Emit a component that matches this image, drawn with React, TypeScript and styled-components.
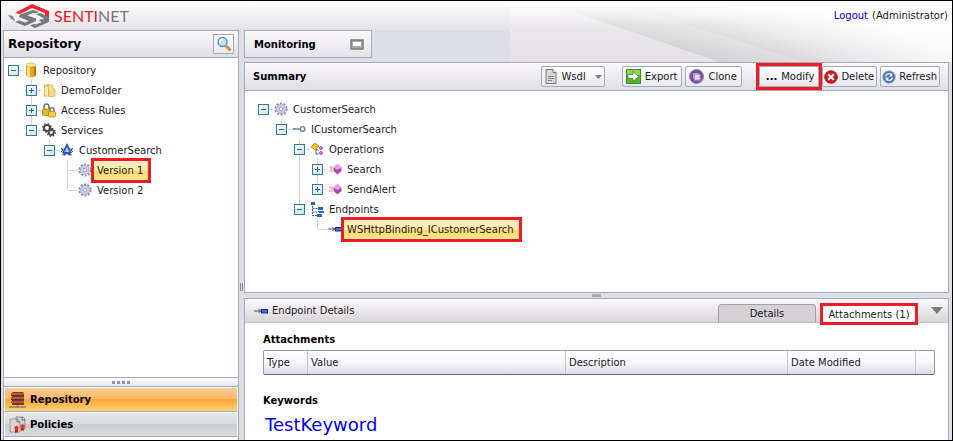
import React from "react";
import styled, { createGlobalStyle, css } from "styled-components";

const line = "#a3abb8";
const softLine = "#d4d5da";
const alert = "#ee1c24";

const highlight = css`
  outline: 3px solid ${alert};
  position: relative;
  z-index: 1;
`;

const GlobalStyle = createGlobalStyle`
  * { box-sizing: border-box; }
  body { margin: 0; }
  body, button, table { font-family: "DejaVu Sans", Verdana, sans-serif; font-size: 10px; color: #1c1c1c; }
  h1, h2, h3, ul, p { margin: 0; padding: 0; }
  ul { list-style: none; }
  button { margin: 0; cursor: pointer; }
  svg { display: block; flex: none; }
`;

const Page = styled.div`
  position: relative;
  display: flex;
  flex-direction: column;
  min-height: 100vh;
  border: 1px solid #000;
  background: #dedee8;
`;

const Backdrop = styled.svg`
  position: absolute;
  top: 0;
  right: 0;
  width: 442px;
  height: 61px;
`;

const Header = styled.header`
  display: flex;
  align-items: center;
  justify-content: space-between;
  height: 29px;
  padding: 0 4px 0 7px;
  background: linear-gradient(#fff, #e4e3eb);
`;

const Brand = styled.div`
  display: flex;
  align-items: center;
  gap: 4px;
  font: 16px/20px Lato, sans-serif;
  color: #77787b;
  b { font-weight: 400; color: #f5161c; }
`;

const Account = styled.div`
  position: relative;
  line-height: 14px;
  a { color: #0000f0; text-decoration: none; margin-right: 4px; }
`;

const Body = styled.div`
  position: relative;
  flex: 1;
  display: grid;
  grid-template-columns: 236px 5px minmax(0, 1fr);
  padding: 0 3px 0 2px;
`;

const Sidebar = styled.aside`
  display: flex;
  flex-direction: column;
  padding-bottom: 3px;
  border: 1px solid ${line};
  border-bottom: 0;
  background: #fff;
`;

const SidebarHead = styled.div`
  display: flex;
  align-items: center;
  justify-content: space-between;
  height: 27px;
  padding: 0 4px;
  border-bottom: 1px solid ${line};
  background: linear-gradient(#fdf9fb, #dedee6);
  h1 { font-size: 12px; color: #000; }
`;

const SearchButton = styled.button`
  display: grid;
  place-items: center;
  width: 21px;
  height: 20px;
  padding: 0;
  border: 1px solid ${line};
  background: linear-gradient(#fff, #e9e9f0);
`;

const Tree = styled.ul`
  flex: 1;
  padding: 2px 4px;
`;

const Branch = styled.ul`
  padding-left: 18px;
`;

const Node = styled.li`
  background: linear-gradient(${softLine}, ${softLine}) 5px 0 / 1px 100% no-repeat;
  &:last-child { background-size: 1px 10px; }
  ${Tree} > & { background: none; }
`;

const NodeRow = styled.div`
  display: flex;
  align-items: center;
  height: 20px;
  white-space: nowrap;
`;

const Expander = styled.button`
  display: grid;
  place-items: center;
  width: 11px;
  height: 11px;
  padding: 0;
  border: 1px solid #2f8096;
  background: linear-gradient(135deg, #fff, #cfe3ea);
`;

const Stub = styled.span<{ $leaf?: boolean }>`
  width: ${p => (p.$leaf ? 9 : 3)}px;
  height: 1px;
  margin: ${p => (p.$leaf ? "0 1px 0 6px" : "0 1px")};
  background: ${softLine};
`;

const Label = styled.span<{ $selected?: boolean }>`
  margin-left: 2px;
  padding: 0 5px 0 3px;
  line-height: 19px;
  ${p => p.$selected && css`
    background: linear-gradient(#fdf0c4, #fce9a9 50%, #fbd75f 51%, #fde79b);
    ${highlight}
  `}
`;

const Grip = styled.div`
  display: flex;
  align-items: center;
  justify-content: center;
  gap: 2px;
  height: 10px;
  border: solid ${line};
  border-width: 1px 0;
  background: linear-gradient(#fff, #e6e6ed);
  i { width: 3px; height: 3px; background: #8f98a6; }
`;

const NavButton = styled.button<{ $active?: boolean }>`
  display: flex;
  align-items: center;
  gap: 4px;
  height: 25px;
  padding: 0 4px;
  border: 1px solid #fff;
  border-bottom: 1px solid ${line};
  font-weight: 700;
  color: #000;
  background: ${p => p.$active
    ? "linear-gradient(#fccb96, #fdb765 48%, #fda637 50%, #fed277)"
    : "linear-gradient(#e6e7ea, #d9dade 48%, #cbccd1 50%, #dcdde1)"};
`;

const ColumnSplitter = styled.div`
  display: flex;
  align-items: center;
  justify-content: center;
  gap: 1px;
  padding-top: 104px;
  i { width: 1px; height: 8px; background: #888; }
`;

const Main = styled.main`
  display: flex;
  flex-direction: column;
  min-width: 0;
`;

const MonitoringBox = styled.section`
  display: flex;
  align-items: center;
  justify-content: space-between;
  width: 128px;
  height: 28px;
  margin-bottom: 4px;
  padding: 0 7px 0 9px;
  border: 1px solid ${line};
  background: linear-gradient(#fbf8fa, #e4e3ea);
  h2 { font-size: 10px; color: #000; }
`;

const MinimizeButton = styled.button`
  padding: 0;
  border: 0;
  background: none;
`;

const Panel = styled.section<{ $grow?: boolean }>`
  display: flex;
  flex-direction: column;
  flex: ${p => (p.$grow ? "1" : "none")};
  border: 1px solid ${line};
  border-bottom-width: ${p => (p.$grow ? 1 : 0)}px;
  background: #fff;
`;

const SummaryHead = styled.div`
  display: flex;
  align-items: center;
  justify-content: space-between;
  height: 28px;
  padding: 0 8px;
  border-bottom: 1px solid ${line};
  background: linear-gradient(#fbf7fa, #dfdfe7);
  h2 { font-size: 10px; color: #000; }
`;

const Toolbar = styled.div`
  display: flex;
  gap: 17px;
`;

const ButtonGroup = styled.div`
  display: flex;
  gap: 3px;
`;

const ToolButton = styled.button<{ $marked?: boolean; $tight?: boolean }>`
  display: flex;
  align-items: center;
  gap: ${p => (p.$tight ? 3 : 4)}px;
  height: 21px;
  padding: ${p => (p.$tight ? "0 2px 0 1px" : "0 4px 0 3px")};
  border: 1px solid ${line};
  border-radius: 2px;
  background: linear-gradient(#fff, #e8e7ee);
  white-space: nowrap;
  ${p => p.$marked && css`padding: 0 4px 0 6px; border-radius: 0; ${highlight}`}
  strong { color: #000; }
`;

const MenuArrow = styled.span`
  margin: 0 -2px 0 5px;
`;

const RowSplitter = styled.div`
  display: grid;
  place-items: center;
  height: 5px;
  i { width: 9px; height: 3px; background: #a7a9af; }
`;

const DetailsHead = styled.div`
  display: flex;
  align-items: center;
  gap: 4px;
  height: 24px;
  padding: 0 5px 0 9px;
  border-bottom: 1px solid #bfc5cf;
  background: linear-gradient(#fdfafd, #d8d5d8);
  h2 { flex: 1; font-size: 10px; font-weight: 400; }
`;

const Tabs = styled.div`
  display: flex;
  align-items: flex-end;
  align-self: stretch;
  gap: 7px;
  margin-right: 12px;
`;

const Tab = styled.button<{ $active?: boolean }>`
  height: 18px;
  padding: 0;
  border: 1px solid #a09fa4;
  border-bottom: 0;
  border-radius: 4px 4px 0 0;
  background: #d5d2d6;
  width: 98px;
  ${p => p.$active && css`
    width: 92px;
    height: 16px;
    border: 0;
    border-radius: 0;
    background: #fff;
    ${highlight}
  `}
`;

const Collapse = styled.button`
  padding: 0;
  border: 0;
  background: none;
`;

const DetailsBody = styled.div`
  padding: 10px 13px 2px 18px;
  h3 { font-size: 10px; line-height: 14px; color: #000; }
`;

const Grid = styled.table`
  width: 100%;
  margin: 3px 0 19px;
  table-layout: fixed;
  border: 1px solid #8f9cab;
  border-bottom-color: #5f6b7c;
  border-radius: 2px;
  border-spacing: 0;
  background: linear-gradient(#fff, #f7f6fc 50%, #dcdce4);
  th {
    height: 23px;
    padding: 0 3px;
    text-align: left;
    font-weight: 400;
    border-left: 1px solid #c3c4cb;
  }
  th:first-child { border-left: 0; }
`;

const Col = styled.col<{ $w?: number }>`
  width: ${p => (p.$w ? `${p.$w}px` : "auto")};
`;

const Keyword = styled.p`
  padding: 3px 0 0 2px;
  font-size: 18px;
  line-height: 27px;
  color: #0000f5;
`;

const Logo = () => (
  <svg width="42" height="24" viewBox="0 0 42 24">
    <path d="M7 9 24 0 41 7v7l-4-2V9L24 4 12 10z" fill="#f5232a" />
    <path d="M0 11l5 1 2 5-4-2z" fill="#8a8b8e" />
    <path d="M12 10.500 25 6l6 2-4 1.500-2-.5-6 2.500 9 3v2.500L17 22 7 18l4-1.500 6 2 4-1.500-10-4z" fill="#77787b" />
    <path d="M28 10l4-1 9 4v5l-14 6-5-2.500 4-1.500 2 .5 6-2.500-3-1 2-2 2 .5 1-1z" fill="#77787b" />
  </svg>
);

const Gear = ({ c = "#8b8fb9", s = 14 }: { c?: string; s?: number }) => (
  <svg width={s} height={s} viewBox="0 0 14 14">
    <circle cx="7" cy="7" r="5.7" fill="none" stroke={c} strokeWidth="1.8" strokeDasharray="2.2 1.38" />
    <circle cx="7" cy="7" r="4.5" fill="#ced0e8" stroke="#a9acd0" />
    <circle cx="7" cy="7" r="1.800" fill="#f7f7fc" stroke={c} strokeWidth=".8" />
  </svg>
);

const Icon = ({ name }: { name: string }) => {
  switch (name) {
    case "database":
      return (
        <svg width="14" height="16" viewBox="0 0 14 16">
          <path d="M2 3v10c0 3 10 3 10 0V3z" fill="#e0a91a" />
          <path d="M3 4v10l3 1V4z" fill="#fbe08a" />
          <path d="M10 4v10.5l2-1V3z" fill="#b57b0c" />
          <ellipse cx="7" cy="3" rx="5" ry="2" fill="#fbe7a0" stroke="#d9a52a" strokeWidth=".6" />
        </svg>
      );
    case "folder":
      return (
        <svg width="14" height="15" viewBox="0 0 14 15">
          <path d="M2 2l5-1v12l-5 1z" fill="#e6be4a" />
          <path d="M6 2h5v4l2 1v6l-6 1z" fill="#f6dd8c" stroke="#d2a637" strokeWidth=".7" />
          <path d="M3 3l3 1v9l-3-1z" fill="#fbedb5" />
        </svg>
      );
    case "locks":
      return (
        <svg width="14" height="15" viewBox="0 0 14 15">
          <path d="M2 7V4c0-4 5-4 5 0v2M8 9V7c0-3 4-3 4 0v2" fill="none" stroke="#737373" strokeWidth="1.6" />
          <rect x=".5" y="6" width="7" height="6.5" rx="1" fill="#e6b923" stroke="#a77e10" strokeWidth=".7" />
          <rect x="6.5" y="8.5" width="7" height="5.5" rx="1" fill="#f3cf47" stroke="#a77e10" strokeWidth=".7" />
        </svg>
      );
    case "services":
      return (
        <svg width="14" height="14" viewBox="0 0 14 14">
          <g fill="none" stroke="#4c4c4c">
            <circle cx="5" cy="5" r="3" strokeWidth="2" />
            <circle cx="5" cy="5" r="4.3" strokeWidth="1.3" strokeDasharray="1.7 1.68" />
            <circle cx="9.3" cy="9.3" r="2.6" strokeWidth="2" />
            <circle cx="9.3" cy="9.3" r="4" strokeWidth="1.3" strokeDasharray="1.6 1.54" />
          </g>
        </svg>
      );
    case "service":
      return (
        <svg width="14" height="14" viewBox="0 0 14 14">
          <path d="M1 6h12M2 12l5-3 5 3" stroke="#c59a3a" strokeWidth="1.5" fill="none" />
          <path d="M7 0l5 10H2z" fill="#2a58ba" />
          <path d="M7 4l2.500 5h-5z" fill="#a9ccff" />
          <path d="M1 5l2 2-2 2M13 5l-2 2 2 2" stroke="#285296" fill="none" />
          <path d="M3 10l1 3 3-2 3 2 1-3z" fill="#2f5fb8" />
        </svg>
      );
    case "interface":
      return (
        <svg width="14" height="14" viewBox="0 0 14 14">
          <path d="M1 7h7" stroke="#7189ab" strokeWidth="1.5" />
          <circle cx="2" cy="7" r="1.2" fill="#7189ab" />
          <circle cx="10.5" cy="7" r="2.4" fill="#edf3fa" stroke="#6880a5" strokeWidth="1.300" />
        </svg>
      );
    case "operations":
      return (
        <svg width="14" height="14" viewBox="0 0 14 14">
          <path d="M5 1l4 3-4 4-4-3z" fill="#f5bd27" stroke="#b77b0b" strokeWidth=".7" />
          <path d="M6 7v5h3M6 8h3" stroke="#666" fill="none" />
          <path d="M11 4l2 2-2 2-2-2zM11 9l2 2-2 2-2-2z" fill="#dd69cf" stroke="#a13a97" strokeWidth=".6" />
        </svg>
      );
    case "method":
      return (
        <svg width="14" height="14" viewBox="0 0 14 14">
          <path d="M1 5h4M2 7h3M1 9h4" stroke="#a6a47a" />
          <path d="M9.500 2l4 3.500v3.500l-4 3.500-4-3.500V5.500z" fill="#b146b2" />
          <path d="M9.500 2l4 3.500-4 2.500-4-2.500z" fill="#f09be9" />
        </svg>
      );
    case "endpoints":
      return (
        <svg width="14" height="15" viewBox="0 0 14 15">
          <path d="M2.500 4v9.500h6M2.500 6.500h6M2.500 10h6M8.500 6v4" stroke="#41598a" strokeDasharray="2 1" fill="none" />
          <path d="M1 0h4v3H1zM8 5h5v3H8zM9 9h5v2H9zM7 12h5v3H7z" fill="#2f63d8" />
        </svg>
      );
    case "endpoint":
      return (
        <svg width="14" height="14" viewBox="0 0 14 14">
          <path d="M0 7h7M4.500 5l2 2-2 2" stroke="#3d4d69" fill="none" />
          <rect x="7.500" y="5.500" width="6" height="3.500" fill="#3f72ec" stroke="#172d83" />
        </svg>
      );
    default:
      return <Gear />;
  }
};

const SearchIcon = () => (
  <svg width="16" height="16" viewBox="0 0 16 16">
    <path d="M10 10l4.500 4.500" stroke="#d18b23" strokeWidth="3" />
    <circle cx="6.500" cy="6" r="4.500" fill="#bfe0fb" stroke="#5f88c0" strokeWidth="1.300" />
    <path d="M4 6c0-2 1-3 3-3" stroke="#fff" strokeWidth="1.300" fill="none" />
  </svg>
);

const ServerIcon = () => (
  <svg width="17" height="18" viewBox="0 0 17 18">
    <path d="M3 2l1-1h10l1 1v12H3z" fill="#7c3a26" />
    <path d="M2 2h13v2H2zM2 6h13v2H2zM2 10h13v2H2z" fill="#bd5535" />
    <path d="M2 4h13v1H2zM2 8h13v1H2z" fill="#4e3930" />
    <path d="M0 16h17M8.500 14v3" stroke="#8c8068" strokeWidth="1.500" />
  </svg>
);

const PolicyIcon = () => (
  <svg width="17" height="18" viewBox="0 0 17 18">
    <path d="M7 1h7l2 2v10H7z" fill="#cfcfcf" stroke="#777" strokeWidth=".8" />
    <path d="M1 3h7l3 3v10H1z" fill="#d6d6d6" stroke="#888" strokeWidth=".8" />
    <path d="M8 3v3h3M13 1v3h3" stroke="#777" fill="none" />
    <path d="M6 13v4l1.500-1L9 17v-4M12 11v4l1.500-1 1.500 1v-4" fill="#c81d1a" />
    <circle cx="7.500" cy="12" r="2.200" fill="#ee3129" />
    <circle cx="13.500" cy="10.500" r="2.200" fill="#ee3129" />
  </svg>
);

const WindowIcon = () => (
  <svg width="14" height="11" viewBox="0 0 14 11">
    <rect x="1" y="1" width="12" height="9" fill="#a9a9a9" stroke="#7b7b7b" strokeWidth="1.500" />
    <rect x="3" y="3" width="8" height="4" fill="#fff" />
  </svg>
);

const DocIcon = () => (
  <svg width="12" height="15" viewBox="1 0 12 15">
    <path d="M2 .5h7l3 3v11H2z" fill="#d8d8d8" stroke="#777" />
    <path d="M9 .5v3h3" fill="#fff" stroke="#777" />
    <path d="M4 7.500h6M4 9.500h6M4 11.500h4" stroke="#858585" />
  </svg>
);

const ExportIcon = () => (
  <svg width="15" height="15" viewBox="0 0 15 15">
    <rect x=".5" y=".5" width="14" height="14" fill="#55b52c" stroke="#3c8e1f" />
    <path d="M1 1h13v5H1z" fill="#8fd35f" />
    <path d="M2 5.500h5V2.500l5.500 5-5.500 5v-3H2z" fill="#fff" stroke="#2e7d16" strokeWidth=".7" />
  </svg>
);

const CloneIcon = () => (
  <svg width="15" height="15" viewBox="0 0 15 15">
    <circle cx="7.500" cy="7.500" r="7" fill="#7b4fa0" stroke="#9d80b8" />
    <rect x="4" y="4" width="5.500" height="5.500" fill="#b9a0d0" />
    <rect x="5.500" y="5.500" width="5.500" height="5.500" fill="#e5daef" stroke="#b496cc" />
  </svg>
);

const DeleteIcon = () => (
  <svg width="14" height="14" viewBox="0 0 15 15">
    <circle cx="7.500" cy="7.500" r="6.800" fill="#cc1a1f" stroke="#8f1114" strokeWidth=".8" />
    <path d="M4.500 4.500l6 6m0-6l-6 6" stroke="#fff" strokeWidth="2.400" />
  </svg>
);

const RefreshIcon = () => (
  <svg width="14" height="14" viewBox="0 0 15 15">
    <circle cx="7.500" cy="7.500" r="6.800" fill="#4b78ad" stroke="#9fb4cc" strokeWidth=".8" />
    <path d="M4 7c0-3 4-4 6-2M11 8c0 3-4 4-6 2" stroke="#e8f1fb" strokeWidth="1.500" fill="none" />
    <path d="M11 3v4H7.500zM4 12V8h3.500z" fill="#e8f1fb" />
  </svg>
);

const Triangle = ({ w, h }: { w: number; h: number }) => (
  <svg width={w} height={h} viewBox="0 0 10 6" preserveAspectRatio="none">
    <path d="M0 0h10L5 6z" fill="#7b7b7b" />
  </svg>
);

type Item = { label: string; icon: string; open?: boolean; selected?: boolean; leaf?: boolean; children?: Item[] };

const repository: Item[] = [
  {
    label: "Repository", icon: "database", open: true, children: [
      { label: "DemoFolder", icon: "folder" },
      { label: "Access Rules", icon: "locks" },
      {
        label: "Services", icon: "services", open: true, children: [
          {
            label: "CustomerSearch", icon: "service", open: true, children: [
              { label: "Version 1", icon: "gear", leaf: true, selected: true },
              { label: "Version 2", icon: "gear", leaf: true },
            ],
          },
        ],
      },
    ],
  },
];

const summary: Item[] = [
  {
    label: "CustomerSearch", icon: "gear", open: true, children: [
      {
        label: "ICustomerSearch", icon: "interface", open: true, children: [
          {
            label: "Operations", icon: "operations", open: true, children: [
              { label: "Search", icon: "method" },
              { label: "SendAlert", icon: "method" },
            ],
          },
          {
            label: "Endpoints", icon: "endpoints", open: true, children: [
              { label: "WSHttpBinding_ICustomerSearch", icon: "endpoint", leaf: true, selected: true },
            ],
          },
        ],
      },
    ],
  },
];

const TreeItem = ({ item }: { item: Item }) => (
  <Node>
    <NodeRow>
      {!item.leaf && (
        <Expander aria-label={`${item.open ? "Collapse" : "Expand"} ${item.label}`}>
          <svg width="7" height="7" viewBox="0 0 7 7">
            <path d={item.open ? "M1 3.500h5" : "M1 3.500h5M3.500 1v5"} stroke="#1d6f88" />
          </svg>
        </Expander>
      )}
      <Stub $leaf={item.leaf} />
      <Icon name={item.icon} />
      <Label $selected={item.selected}>{item.label}</Label>
    </NodeRow>
    {item.children && (
      <Branch>{item.children.map(c => <TreeItem key={c.label} item={c} />)}</Branch>
    )}
  </Node>
);

const SummaryTree = styled(Tree)`
  padding: 8px 13px;
`;

export default function App() {
  return (
    <Page>
      <GlobalStyle />
      <Backdrop viewBox="0 0 442 61" preserveAspectRatio="none" aria-hidden="true">
        <defs>
          <linearGradient id="band" gradientUnits="userSpaceOnUse" x1="210" y1="61" x2="225" y2="15">
            <stop offset="0" stopColor="#d3d3d5" />
            <stop offset="1" stopColor="#ececee" />
          </linearGradient>
          <linearGradient id="glow" gradientUnits="userSpaceOnUse" x1="293" y1="61" x2="310" y2="8">
            <stop offset="0" stopColor="#d9d9db" />
            <stop offset=".45" stopColor="#ececee" />
            <stop offset="1" stopColor="#fcfbfc" />
          </linearGradient>
          <linearGradient id="fade" x1="0" y1="0" x2="0" y2="1">
            <stop offset="0" stopColor="#fff" />
            <stop offset=".15" stopColor="#fff" stopOpacity=".8" />
            <stop offset=".4" stopColor="#fff" stopOpacity=".25" />
            <stop offset=".8" stopColor="#fff" stopOpacity="0" />
          </linearGradient>
        </defs>
        <rect width="442" height="61" fill="#e6e2e7" />
        <path d="M31 0H442V61H210z" fill="url(#band)" />
        <path d="M104 0H442V61H293z" fill="url(#glow)" />
        <rect width="442" height="61" fill="url(#fade)" />
      </Backdrop>
      <Header>
        <Brand>
          <Logo />
          <span><b>SENTI</b>NET</span>
        </Brand>
        <Account><a href="#logout">Logout</a>(Administrator)</Account>
      </Header>
      <Body>
        <Sidebar>
          <SidebarHead>
            <h1>Repository</h1>
            <SearchButton aria-label="Search"><SearchIcon /></SearchButton>
          </SidebarHead>
          <Tree>{repository.map(i => <TreeItem key={i.label} item={i} />)}</Tree>
          <Grip><i /><i /><i /><i /></Grip>
          <NavButton $active><ServerIcon />Repository</NavButton>
          <NavButton><PolicyIcon />Policies</NavButton>
        </Sidebar>
        <ColumnSplitter><i /><i /></ColumnSplitter>
        <Main>
          <MonitoringBox>
            <h2>Monitoring</h2>
            <MinimizeButton aria-label="Restore monitoring"><WindowIcon /></MinimizeButton>
          </MonitoringBox>
          <Panel $grow>
            <SummaryHead>
              <h2>Summary</h2>
              <Toolbar>
                <ToolButton><DocIcon />Wsdl<MenuArrow><Triangle w={7} h={4} /></MenuArrow></ToolButton>
                <ButtonGroup>
                  <ToolButton><ExportIcon />Export</ToolButton>
                  <ToolButton><CloneIcon />Clone</ToolButton>
                </ButtonGroup>
                <ButtonGroup>
                  <ToolButton $marked><strong>...</strong>Modify</ToolButton>
                  <ToolButton $tight><DeleteIcon />Delete</ToolButton>
                  <ToolButton $tight><RefreshIcon />Refresh</ToolButton>
                </ButtonGroup>
              </Toolbar>
            </SummaryHead>
            <SummaryTree>{summary.map(i => <TreeItem key={i.label} item={i} />)}</SummaryTree>
          </Panel>
          <RowSplitter><i /></RowSplitter>
          <Panel>
            <DetailsHead>
              <Icon name="endpoint" />
              <h2>Endpoint Details</h2>
              <Tabs role="tablist">
                <Tab role="tab" aria-selected="false">Details</Tab>
                <Tab role="tab" aria-selected="true" $active>Attachments (1)</Tab>
              </Tabs>
              <Collapse aria-label="Collapse details"><Triangle w={12} h={7} /></Collapse>
            </DetailsHead>
            <DetailsBody>
              <h3>Attachments</h3>
              <Grid>
                <colgroup>
                  <Col $w={43} /><Col /><Col $w={222} /><Col $w={128} /><Col $w={19} />
                </colgroup>
                <thead>
                  <tr><th>Type</th><th>Value</th><th>Description</th><th>Date Modified</th><th aria-label="Actions" /></tr>
                </thead>
              </Grid>
              <h3>Keywords</h3>
              <Keyword>TestKeyword</Keyword>
            </DetailsBody>
          </Panel>
        </Main>
      </Body>
    </Page>
  );
}
